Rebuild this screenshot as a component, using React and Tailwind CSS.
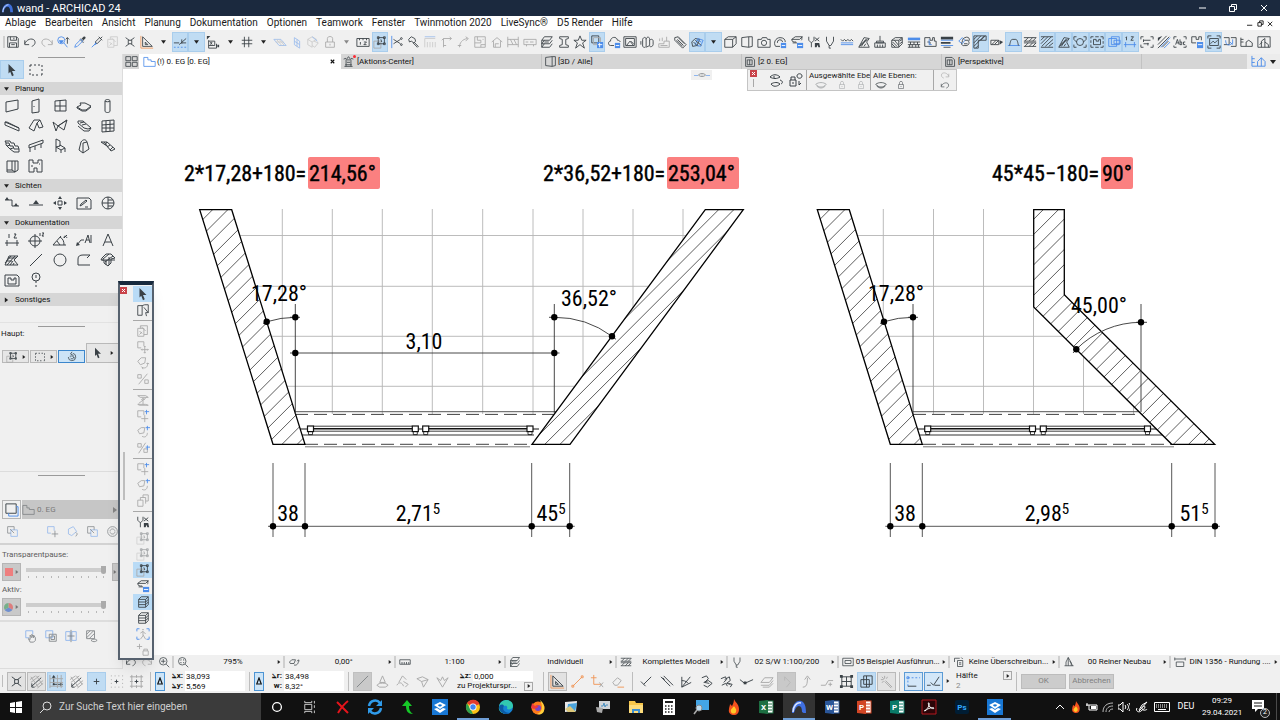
import clsx from "clsx";

const INK = {
    k: "#3a4146",
    b: "#4d8dea",
    o: "#f0975a",
    g: "#a9a9a9",
    w: "#ffffff",
};

// Each glyph is a list of [colour, path]; an upper-case colour fills instead of stroking.
const GLYPHS = {
    save: [["k", "M2 2h10l2 2v10H2zM5 2v4h7V2M4 14V9h8v5M6 11h4M9 3v2"]],
    undo: [["k", "M2 6v5h5M2 10C4 5 10 3 13 6c2 3 0 6-3 7"]],
    redo: [["g", "M14 6v5H9M14 10C12 5 6 3 3 6c-2 3 0 6 3 7"]],
    find: [["b", "M2 6a4 4 0 1 0 8 0a4 4 0 1 0-8 0M9 9l4 5"], ["B", "M3 6h6l-2 3H5z"], ["k", "M13 3v7M11 5l2-2 2 2"]],
    dropper: [["k", "M9 4l3 3M8 5l4 4"], ["b", "M2 14l1-3 6-6 2 2-6 6z"], ["K", "M10 4l2-2c2-1 3 1 2 2l-2 2z"]],
    syringe: [["b", "M2 14l5-5"], ["B", "M6 8l2 2-3 2z"], ["k", "M6 8l5-5 2 2-5 5zM10 2l4 4M12 4l2-2"]],
    shape: [["g", "M2 5h7v9H2zM5 5V2h8v10h-4M4 8l3 3M6 3l5 5M4 12l3-3"]],
    shrink: [["k", "M3 3l4 3M13 3L9 6M3 13l4-3M13 13l-4-3M6 6h4v4H6z"]],
    setsquare: [["o", "M1 1v14h14"], ["k", "M3 2v11h11zM6 8v3h3z"]],
    guide: [["k", "M1 9h6M10 9h5M7 11l8-7M10 5v5"], ["b", "M1 14h2M5 14h2M9 14h2M13 14h2"]],
    xy: [["k", "M3 6v9h9v-4M3 7h7v5H3M5 8l2 3M7 8l-2 3M12 10v3"], ["K", "M1 1h4L1 5zM13 11h2v3h-2z"]],
    grid: [["k", "M5 2v12M10 2v12M2 6h12M2 10h12"]],
    planeA: [["b", "M1 5h8l6 7H7z"], ["g", "M4 5l6 7M7 5l6 7M3 8h9"]],
    planeB: [["b", "M5 3l6 4v8l-6-4zM8 5v8M5 7l6 4"]],
    planeC: [["g", "M2 5l5-3 5 3-5 3zM2 5v6l5 3V8M9 7l5 2-4 5-3-2"], ["b", "M7 2l6 5"]],
    lock: [["g", "M3 8h10v6H3zM5 8V4c0-3 6-3 6 0v4M8 10v2"]],
    ruler: [["k", "M1 4h14v9H1zM4 4v2M8 4v2M12 4v2M5 8v3M9 8h3l-3 3h3"]],
    group: [["g", "M1 7h8v8H1z"], ["k", "M6 3h7v7H6zM5 2h2v2H5zM12 2h2v2h-2zM5 9h2v2H5zM12 9h2v2h-2zM9 5l1 3"]],
    cut: [["b", "M2 1v14"], ["k", "M4 5l8 5M4 10l8-5M12 4a1 1 0 1 0 2 0a1 1 0 1 0-2 0M12 11a1 1 0 1 0 2 0a1 1 0 1 0-2 0"]],
    hammer: [["k", "M3 5l3-3 4 2 1 3-2 2-3-2-2 1zM9 8l5 5-1 1-5-5"]],
    rail: [["g", "M2 14V4h12M5 14V8M8 14V8M11 14V8M14 14V8"], ["b", "M2 2h12"]],
    corner: [["g", "M4 14V4h9M2 6l2-2M11 2l2 2-2 2M4 12h3"]],
    curve: [["g", "M4 14c0-5 3-9 9-10M11 2l3 2-3 3M2 12h4"]],
    sheet: [["g", "M2 2h12v12H2zM5 2v4h4v3H2M9 14v-3h5M11 5h1"]],
    house: [["g", "M2 8l6-5 6 5M4 7v7h8V7M6 14v-4h4"]],
    beamH: [["g", "M2 2v12M14 2v12M2 5h12M2 11h12M5 5l3 6M9 5l3 6"]],
    bus: [["g", "M1 5h14v6H1zM3 8h3M8 8h4M4 11v2M12 11v2"]],
    layersK: [["k", "M2 6l3-4h9l-3 4zM2 10l3-4M2 10h9l3-4M2 14l3-4M2 14h9l3-4M2 6v8M5 8h5"]],
    ibeam: [["k", "M3 2h10v2l-3 1v6l3 1v2H3v-2l3-1V5L3 4z"]],
    star: [["k", "M8 1l2 5h5l-4 3 2 6-5-4-5 4 2-6-4-3h5z"]],
    copyB: [["k", "M2 1h8v8H2z"], ["g", "M4 3h8v8H4z"], ["B", "M8 8h7v7H8z"], ["w", "M9 11h5M11 9v5"]],
    cloud: [["k", "M8 12H4c-3 0-3-5 0-5 0-5 7-6 8-1 2 0 3 1 3 2"], ["B", "M9 9h6v6H9z"], ["w", "M10 12h4"]],
    picture: [["k", "M1 2h14v12H1zM3 4h10v8H3zM4 12l4-5 4 5M9 7l3 3"]],
    rollers: [["k", "M3 5c1-3 4-3 4 0v8c-1 2-3 1-4 0zM7 5c1-4 4-3 4 0v7l-4 2M11 6c2-2 4-1 4 1v4c0 2-3 3-4 2M1 7v4"]],
    water: [["g", "M8 7h6v7H2v-4h6zM3 4v3M6 3v4M11 2v5M4 12h8"]],
    tag: [["k", "M2 3l4-1 9 9-4 4-9-9zM5 5l7 7M6 3l7 7M4 6l7 7"]],
    solid: [["k", "M2 8l4-4 5 1-3 7-5 1z"], ["b", "M6 11l3-7 6 2-3 7zM8 6l5 2"], ["k", "M4 8l5 5M6 6l7 6"]],
    cube: [["k", "M2 5l4-3h9v8l-4 4H2zM2 5h9v9M11 5l4-3"]],
    persp: [["k", "M2 3l8-1v12l-8-1zM10 2h4v11l-4 1"]],
    camera: [["k", "M1 5h4l1-2h5l1 2h3v9H1zM5 9a3 3 0 1 0 6 0a3 3 0 1 0-6 0"]],
    cameraB: [["k", "M8 13H3C0 9 3 3 8 3c4 0 6 2 6 5M5 9a3 3 0 0 1 6-1"], ["B", "M9 9h6v6H9z"], ["w", "M10 12h4"]],
    layerB: [["k", "M2 5l4-3h8l-3 3zM2 5c0 3 2 3 5 3M3 9h5M14 2c-1 2 0 3-1 4"], ["B", "M8 9h7v6H8z"], ["w", "M9 12h5"]],
    pens: [["k", "M2 2v4l3 3 3-3V2M5 9v5M9 3l5 4M14 3L9 7"], ["K", "M9 14V9h5l1 5h-2l-1-3-1 3z"]],
    pen: [["k", "M4 2v5l3 5h2l3-5V2M7 12v3h2"]],
    waves: [["k", "M1 5l2 2 2-2 2 2 2-2 2 2 2-2 2 2"], ["b", "M1 9h14M1 11h14"]],
    hatch: [["k", "M2 14L8 3l6 1-3 4 3 6zM5 13l5-8M8 13l2-3M4 11l7-6M3 13l9-8"]],
    broom: [["k", "M8 1v6M4 7h8v2H4zM2 9h12v5H2zM5 11v3M8 11v3M11 11v3"]],
    block: [["k", "M2 6l4-3h8v7l-4 4H2zM2 6h8v8M10 6l4-3M3 8l5 5M2 10l4 4M5 6l5 6M11 7l3-2M11 10l3-2"]],
    brick: [["B", "M1 3h14v3H1z"], ["k", "M1 8h14M1 11h14M1 14h14M4 8v3M8 8v3M12 8v3M3 11v3M6 11v3M10 11v3M13 11v3"]],
    plan: [["k", "M2 3h6v3h3V3h2v4h2v6H2zM5 8h3v3"], ["b", "M7 5v6h3"]],
    bars: [["K", "M1 2h14v3H1zM1 8h11v2H1z"], ["b", "M1 6h14M1 12h14"], ["k", "M4 14h8"]],
    clouds: [["b", "M2 7l4-4 3 3-3 4z"], ["k", "M9 3c4-2 7 2 4 4 2 2 0 6-4 5-3 1-5-2-3-4 0-3 1-4 3-5M9 6h4M8 10h4"]],
    wallcorner: [["k", "M1 1h14v5H6v9H1zM1 5l4-4M1 9l8-8M1 13l12-12M3 15l3-3M9 6l5-5"]],
    wallarrow: [["k", "M1 6h9v5H1zM2 11l5-5M5 11l5-5"], ["K", "M11 6l4 2-4 3z"]],
    trapez: [["b", "M1 12h14"], ["k", "M3 12c1-6 2-7 3-7h4c1 0 2 1 3 7"]],
    hatchH: [["k", "M1 3h14M1 7h14M1 9h14M1 13h14M2 7l4-4M7 7l4-4M11 7l4-4M2 13l4-4M7 13l4-4M11 13l4-4"]],
    hatchF: [["k", "M1 2h14M1 14h14M1 6l4-4M1 10l8-8M2 13l11-11M6 13l9-8M10 13l5-4"]],
    target: [["k", "M4 8a4 4 0 1 0 8 0a4 4 0 1 0-8 0M1 5V2h3M12 2h3v3M15 11v3h-3M4 14H1v-3M4 8l-3-3M12 8l3-3"]],
    planframe: [["k", "M1 4V2h3M6 2h4M12 2h3v3M15 7v3M15 12v2h-3M10 14H6M4 14H1v-3M1 9V6M4 5h3v2h3V5h2v6H4z"]],
    stack: [["b", "M2 4h9v9H2zM5 2h9v9H5zM8 6h7v4H8z"]],
    dim: [["k", "M4 2v4M3 3l1-1M7 6h0M9 2h3l-3 4h3"], ["b", "M1 11h14M3 8v6M13 8v6"]],
    bounds: [["k", "M1 5V2h3M12 2h3v3M15 11v3h-3M4 14H1v-3M4 6h8M4 10h6M4 5v3M9 9v3"]],
    stripes: [["K", "M1 3l5-2-5 6z"], ["b", "M4 14L15 3M8 15l7-7"], ["k", "M1 11L11 1M1 15L14 2M6 14l7-7"]],
    abc: [["k", "M1 5V2h3M12 2h3v3M15 12v2h-3M4 14H1v-2M3 11l2-6 2 6M4 9h2M8 5v6h2V8H8M14 8h-2v3h2"]],
    planB: [["k", "M2 2h5v3h3V2h3v4M2 2v7h5"], ["B", "M8 8h7v7H8z"], ["w", "M9 11h5"]],
    image: [["k", "M1 4V1h4M11 1h4v3M15 12v3h-4M5 15H1v-3M3 4h10v8H3zM4 10l3-3 2 2 3-3M9 6h0"]],
    refs: [["k", "M1 3h6v8H1M9 3h6v10H9"], ["b", "M3 6c0 6 4 7 8 3M11 5v5M8 8l3 3"]],
    home3: [["k", "M1 3v10h6V8l3-2 4 3v4H7M1 5h3M1 8h3"]],
    frameP: [["k", "M1 2h14v12H1zM5 14V7l4-3v10M9 8l4 3v3M3 11l3-3"]],
    arrow: [["K", "M4 1l8 8H8l2 5-2 1-2-5-2 2z"]],
    marquee: [["k", "M2 3h2M6 3h2M10 3h2M14 3v2M14 7v2M14 11v2h-1M10 13H8M6 13H4M2 13v-2M2 9V7M2 5V3"]],
    wall: [["k", "M2 4l12-2v9L2 14z"]],
    door: [["k", "M4 3l7-2v13l-7 1zM6 8v1"]],
    window: [["k", "M3 3l11-1v11H3zM8 3v10M3 8h11"]],
    slab: [["k", "M1 9l4-2-1-2h5l6 3-5 4H6zM1 9v1l5 3h4l5-4"]],
    column: [["k", "M5 3c0-2 5-2 5 0v10c0 2-5 2-5 0zM5 3c0 1 5 1 5 0"]],
    beam: [["k", "M1 4l14 6v3L1 7zM1 4h2l12 6"]],
    roof: [["k", "M1 10l5-8h6l3 7-4 1-2-5-3 8zM12 2l-3 3"]],
    shell: [["k", "M1 4l5 4 9-6-3 10-6-4-2 5zM6 8l9-6"]],
    stair: [["k", "M2 3h5l8 7-3 1-4-1-6-5zM4 5l4-1M6 7l4-1M2 8l6 5h5l2-3"]],
    mesh: [["k", "M2 3l12-1v11L2 14zM6 3v11M10 3v10M2 7l12-1M2 10h12"]],
    stairs: [["k", "M1 3h5l1 2h3l1 3h3l1 3h-5l-1-3H6L5 5H2zM2 5v2l4 4 4 3h5v-3M3 8l3-1M6 11l3-1"]],
    railing: [["k", "M1 7l14-5v3L1 10zM2 10v4M7 8v4M13 6v4"]],
    chair: [["k", "M4 1v8l4-1V3zM4 9l5 3 4-2-5-3M4 9v5M9 12v3M13 10v4M8 7v1"]],
    zone: [["k", "M5 4c2-3 5-3 6 0l2 7-6 4-4-3zM7 15V5l4-1"]],
    curtain: [["k", "M1 4h6l8 7-4 2-4-5-6-4M4 4l4 5M7 4L5 7M10 7l-3 2M13 9l-3 3"]],
    morph: [["k", "M3 3h11v9l-3 2H3zM3 12h5V3M8 12l3 2M11 3v11"]],
    object: [["k", "M1 2h4v3h5V2h4v12h-5v-4H6v4H1zM3 8h2M11 6h1"]],
    section: [["k", "M1 5h7v6h7"], ["K", "M1 5l2-3 2 3zM10 11l2-3 2 3z"]],
    elevation: [["k", "M1 10h14"], ["K", "M5 9l3-4 3 4z"]],
    interior: [["k", "M6 6h4v4H6z"], ["K", "M8 1l2 3H6zM8 15l2-3H6zM1 8l3-2v4zM15 8l-3-2v4z"]],
    worksheet: [["k", "M1 3h12l2 2v9H1zM4 11l1-2 5-4 1 1-5 4zM9 12h3"]],
    detail: [["k", "M2 8a6 6 0 1 0 12 0a6 6 0 1 0-12 0M8 2v12M8 5h5M8 8h6M8 11h5M2 8h6"]],
    dimension: [["k", "M1 11h14M3 8v6M13 8v6M5 2v4M8 6h0M10 2h2l-2 4h3"]],
    level: [["k", "M2 9a5 5 0 1 0 10 0a5 5 0 1 0-10 0M7 2v14M0 9h14M12 1v3M14 1h2l-2 3h2"]],
    angle: [["k", "M1 13h13M1 13L9 4M8 5c3 2 4 4 4 8M5 9l3 4M12 6c0-3 2-2 3 0M15 3l-3 3"]],
    label: [["k", "M1 13l4-5h3M9 11l3-8 2 8M10 8h3M15 3v8"], ["K", "M0 14l1-4 3 3z"]],
    text: [["k", "M3 14L8 2l5 12M5 10h6"]],
    fill: [["k", "M1 13L5 4h9l-4 4 4 5zM3 13l8-9M6 13l3-4M1 11l6-7M9 13l1-2M2 9h6M4 6h8"]],
    line: [["k", "M2 14L14 2"]],
    circle: [["k", "M2 8a6 6 0 1 0 12 0a6 6 0 1 0-12 0"]],
    polyline: [["k", "M14 13H2V7c0-3 2-4 5-4h7l-3 3"]],
    drawing: [["k", "M2 6l4-4h5l4 4-4 1v4l-3 3-4-3V8L1 8zM3 7l6-5M5 10l8-6M6 8v5M9 5v8M2 8h13"]],
    figure: [["k", "M1 3h12l2 2v9H1zM4 6h3v2h3V6h2v6H4z"]],
    pin: [["k", "M4 5a4 4 0 1 0 8 0a4 4 0 1 0-8 0M8 9v2M8 13v2M8 3v3"]],
    drag: [["g", "M2 2h7v5M2 2v7h4M10 7v8M6 11h8M9 8l1-1 1 1M9 14l1 1 1-1M7 10l-1 1 1 1M13 10l1 1-1 1"]],
    rotate: [["g", "M2 6l4-4h5l-1 6-5 2zM7 13c4 2 7-1 6-5M6 12l1 1 1 2M12 9l1-1 2 1"]],
    mirror: [["g", "M13 2L3 14M2 3h4v4H2zM10 9h4v4h-4z"]],
    elevate: [["g", "M2 3h9l3 2H5zM2 13h9l3 1H4zM8 6v7M6 8l2-2 2 2M3 12l9-7"]],
    dragP: [["g", "M2 2h7v5M2 2v7h4M10 7v8M6 11h8"], ["b", "M12 1v5M10 3h5"]],
    rotateP: [["g", "M2 6l4-3h4l-1 6-5 1zM7 13c4 2 6-1 6-4"], ["b", "M13 1v5M11 3h5"]],
    mirrorP: [["g", "M11 2L3 14M2 3h4v4H2zM9 9h4v4H9z"], ["b", "M13 5v5M11 7h5"]],
    copies: [["g", "M2 7h6v7H2zM5 4h6v7M8 1h6v7h-3M5 4v3M8 1v3"]],
    select: [["k", "M2 3h5v11H2zM7 3l3-1h4v9M9 5l5 6h-3l1 4"]],
    sheets: [["k", "M3 5l3-3h8v9l-3 3H3zM3 5h8l3-3M3 8h8l3-3M3 11h8l3-3M11 5v9"]],
    run: [["b", "M1 5V2h3M12 2h3v3M15 11v3h-3M4 14H1v-3"], ["g", "M7 3h2M5 7l3-2 3 3M8 5v5l-3 4M8 9l3 5"]],
    lockP: [["g", "M8 9h6v5H8zM9 9V7h4v2M4 1v6M1 4h6"]],
    zoomin: [["k", "M2 7a5 5 0 1 0 10 0a5 5 0 1 0-10 0M11 11l4 4M4 7h6M7 4v6"]],
    fit: [["k", "M2 7a5 5 0 1 0 10 0a5 5 0 1 0-10 0M11 11l4 4M5 6V5h1M8 5h1v1M9 8v1H8M6 9H5V8"]],
    tilt: [["k", "M2 8l3-3h5l-2 5H3zM8 12c4 1 6-2 6-6M12 7l2-2 1 2"]],
    scale: [["k", "M1 5h14v6H1zM4 8v3M7 8v3M10 8v3M13 8v3"]],
    layout: [["k", "M1 3h14v10H1zM4 6h8v4H4z"]],
    override: [["k", "M2 3h7M2 3v5M6 6h7v8H6zM8 9h3M8 11h3M11 2l2 2"]],
    reno: [["k", "M2 13h12M4 13V8l3-6 4 7v4M9 7l4 6M7 2v11"]],
    stdim: [["k", "M1 4h14M1 2v4M15 2v4M3 8h10v6H3z"]],
    snapgrid: [["k", "M3 13L13 4M3 10v4h3"], ["g", "M1 6l6-4M2 9l9-7M6 14l9-7M9 15l6-5M2 3l8 11M8 2l6 9"]],
    ortho: [["k", "M5 3v8h8"], ["K", "M3 4l2-3 2 3zM12 9l3 2-3 2zM4 10h2v2H4z"], ["g", "M1 5h14M1 9h14M9 1v14M13 1v14M1 13h14M1 1v14"]],
    plus: [["k", "M8 5v6M5 8h6"]],
    dots: [["k", "M8 6v4M6 8h4"], ["g", "M2 2h1M6 2h1M10 2h1M14 2h1M2 6h1M14 6h1M2 10h1M14 10h1M2 14h1M6 14h1M10 14h1M14 14h1"]],
    gridplus: [["k", "M8 6v4M6 8h4"], ["g", "M3 1v14M13 1v14M1 3h14M1 13h14M8 1v3M8 12v3M1 8h3M12 8h3"]],
    slash: [["k", "M2 14L14 2"]],
    cone: [["g", "M8 2l3 7H5zM2 12c2-3 10-3 12 0l-3 2H5z"]],
    bell: [["g", "M4 9l4-7 4 4M2 12c2-4 6-3 7 1M9 8l5 3-3 3"]],
    kite: [["g", "M2 5l6-2 6 3-5 8-2-6zM7 8l7-2"]],
    nodes: [["g", "M8 14L2 4l4 3 2-4 2 4 4-3z"]],
    nodeline: [["o", "M3 13L13 3M2 12h2v2H2zM12 2h2v2h-2z"]],
    nodex: [["o", "M4 1v10h8M1 4h6"], ["g", "M10 9l4 5M14 9l-4 5"]],
    eraser: [["g", "M3 9l5-5 4 3-4 5H5z"], ["o", "M8 14h7"]],
    check: [["k", "M2 8l5 5M5 11l8-8"]],
    parallel: [["k", "M2 3l10 10M5 2l10 10M4 4l2 2"]],
    bisect: [["k", "M3 14V3M3 14l10-5M3 14L12 3M3 7c4 0 6 2 7 3"]],
    offset: [["k", "M3 4l5-2 2 3-4 4 5 1M5 9l5-2 4 3-5 4-4-2"]],
    multi: [["k", "M2 5l5-2 1 3-3 3M6 6l5-3 1 4-4 3 4 1M3 12l4-2 2 3M10 10l4 1-2 3"]],
    onarc: [["k", "M1 6l5 4 9-4"], ["K", "M5 8h3v3H5z"]],
    slabs: [["g", "M2 9l4-5h9l-4 5zM2 12h9l4-5M4 14h7l4-4"]],
    bend: [["g", "M6 3l6 6-4 5M6 3v4"]],
    bend2: [["g", "M4 14c4 0 5-3 5-10M6 6l3-4 3 4"]],
    bend3: [["g", "M2 12h5l3-5h5M12 9v4M10 11h4"]],
    resize: [["k", "M3 3h10v10H3zM8 3v10M3 8h10"], ["K", "M1 1h3v3H1zM12 1h3v3h-3zM1 12h3v3H1zM12 12h3v3h-3z"]],
    overlap: [["k", "M2 6h9v8H2zM5 2h9v9H5zM8 2v12"]],
    wand: [["g", "M7 7l7 7M6 2v3M2 6h3M3 3l2 2M9 3L8 5M3 9l2-1M6 8l7 7"]],
    origin: [["b", "M2 4h2M6 4h2M10 4h2M14 4h1M1 3h2v2H1zM2 7v2M2 11v2"], ["k", "M2 13h9"]],
    snapcheck: [["k", "M5 9l3 3 6-9M1 12h4M9 12h6"]],
    floor: [["k", "M2 2h11v10H2z"], ["b", "M13 5h2v10H5v-3"]],
    folder: [["k", "M1 3h5v3h3v2h6v6H1z"]],
    swap: [["b", "M6 6h8v8H6z"], ["k", "M2 2h8v4M2 2v8h4M5 5l5 5"]],
    dragB: [["b", "M2 2h8v5M2 2v8h4"], ["k", "M11 7v8M7 11h8"]],
    rotateB: [["b", "M3 5l6-3 4 6-6 5-4-2z"], ["k", "M12 9l2 2-2 3"]],
    cycle: [["k", "M2 8a6 6 0 1 0 12 0a6 6 0 1 0-12 0M5 8c0-4 5-4 6-1M11 8c0 4-5 4-6 1"]],
    hand: [["b", "M2 2h8v4M2 2v8h4"], ["k", "M7 15l-2-4 2 1V7l2 3V6l2 4V7l2 3v3l-2 2z"]],
    merge: [["b", "M2 2h8v8H2z"], ["k", "M6 6h8v8H6zM8 8h4v4H8z"]],
    split: [["b", "M2 3h5v10H2zM9 3h5v10H9z"], ["k", "M8 1v14M4 8h8"]],
    hatchB: [["k", "M3 2h9v9H3zM3 6l4-4M3 10l8-8M6 11l6-6M8 13c2-2 5-2 7 0-2 2-5 2-7 0"]],
    eye: [["k", "M1 8c4-4 10-4 14 0-4 4-10 4-14 0M7 8h2"]],
    lid: [["k", "M1 7c4-3 10-3 14 0-4 5-10 5-14 0M2 9c4 4 8 4 12 0"]],
    eyes: [["k", "M2 5c3-3 7-3 10 0-3 2-7 2-10 0M6 4v2M3 12c3-2 7-2 9 0-3 3-7 3-9 0M12 8c3 1 3 3 1 4"]],
    locks: [["k", "M2 8h6v6H2zM3 8V5h4v3M9 4c0-3 5-3 5 0 0 3-5 3-5 0M11 9v4l2-2M5 10v2"]],
    padlock: [["k", "M3 7h10v8H3zM5 7V3c0-3 6-3 6 0v4M8 10v2"]],
    viewmap: [["b", "M1 2v11h6V8l4-4 4 4v5H7M1 5h3M1 9h3M11 4v9"]],
    window2: [["k", "M2 3h8l3 3v8H2zM4 6h6v6H4zM7 6v6"]],
    quads: [["k", "M1 2h6v5H1zM9 2h6v5H9zM1 9h6v5H1zM9 9h6v5H9z"]],
    plantab: [["b", "M1 3h5v3h4v2h5v6H1z"]],
    tower: [["k", "M5 14V6l3-4 3 4v8M3 14h10M6 9h4M6 6h4M4 12h8M2 5l3-1M14 5l-3-1"]],
    magnet: [["k", "M3 8a5 5 0 1 0 6-5M8 1L6 4l4 2M6 9l2 2 3-3M5 7c3-1 6 0 6 3"]],
};

function Glyph({ name, className }) {
    return (
        <svg viewBox="0 0 16 16" aria-hidden="true" className={clsx("shrink-0", className || "size-4")}>
            {GLYPHS[name].map(([c, d], i) => {
                const filled = c !== c.toLowerCase();
                const color = INK[c.toLowerCase()];
                return (
                    <path
                        key={i}
                        d={d}
                        fill={filled ? color : "none"}
                        stroke={filled ? "none" : color}
                        strokeWidth="1"
                        strokeLinejoin="round"
                    />
                );
            })}
        </svg>
    );
}

function Caret({ right, className }) {
    return (
        <svg viewBox="0 0 6 6" aria-hidden="true" className={clsx("size-[6px] shrink-0", className)}>
            <path d={right ? "M1 0l4 3-4 3z" : "M0 1h6L3 5z"} fill="#222" />
        </svg>
    );
}

// "*" marks a pressed button, "-" a disabled one
const TOOLBAR = (
    "save undo redo find dropper syringe -shape shrink setsquare caret *guide *caret xy caret grid caret " +
    "-planeA -planeB -planeC lock -caret ruler *group cut hammer -rail corner curve sheet house beamH bus " +
    "layersK ibeam star *copyB cloud picture rollers water tag *solid *caret cube persp camera cameraB layerB " +
    "pens pen waves hatch broom block brick plan bars clouds *wallcorner wallarrow *trapez hatchH *hatchF " +
    "*hatch *target *planframe *stack *dim bounds stripes abc planB *image refs home3 frameP"
).split(" ");

const MENU = [
    "Ablage", "Bearbeiten", "Ansicht", "Planung", "Dokumentation", "Optionen",
    "Teamwork", "Fenster", "Twinmotion 2020", "LiveSync®", "D5 Render", "Hilfe",
];

const SECTIONS = [
    {
        title: "Planung",
        tools: "wall door window slab column beam roof shell stair mesh stairs railing chair zone curtain morph object".split(" "),
    },
    { title: "Sichten", tools: "section elevation interior worksheet detail".split(" ") },
    {
        title: "Dokumentation",
        tools: "dimension level angle label text fill line circle polyline drawing figure pin".split(" "),
    },
    { title: "Sonstiges", tools: [] },
];

const PALETTE = [
    ["*arrow", "select"],
    ["shape", "drag", "rotate", "mirror"],
    ["elevate", "dragP", "rotateP", "mirrorP"],
    ["dragP", "rotateP", "copies"],
    ["pens", "-group", "-group", "*group", "layerB", "*sheets", "sheets", "run", "lockP"],
];

const VIEW_OPTIONS = [
    ["fit", "795%"],
    ["tilt", "0,00°"],
    ["scale", "1:100"],
    ["layersK", "Individuell"],
    ["hatchH", "Komplettes Modell"],
    ["pen", "02 S/W 1:100/200"],
    ["layout", "05 Beispiel Ausführun..."],
    ["override", "Keine Überschreibun..."],
    ["reno", "00 Reiner Neubau"],
    ["stdim", "DIN 1356 - Rundung ...."],
];

function parse(token) {
    return {
        on: token[0] === "*",
        off: token[0] === "-",
        name: token.replace(/^[*-]/, ""),
    };
}

function Titlebar() {
    return (
        <header className="flex h-4 shrink-0 items-center bg-[#1b293e] pl-0.5 text-white">
            <svg viewBox="0 0 12 12" className="size-[11px]" aria-hidden="true">
                <path d="M0 10C0 4 4 0 8 1c3 1 4 5 4 9H9c0-4-1-6-3-6S2 7 2 10z" fill="#3f6fd8" />
                <path d="M1 10c0-5 3-8 6-8" stroke="#dfe9ff" fill="none" />
            </svg>
            <h1 className="ml-1 text-[11px]">wand - ARCHICAD 24</h1>
            <div className="ml-auto flex">
                <button aria-label="Minimieren" className="flex w-[30px] justify-center">
                    <svg viewBox="0 0 8 8" className="size-2"><path d="M0 4h7" stroke="#fff" /></svg>
                </button>
                <button aria-label="Verkleinern" className="flex w-[30px] justify-center">
                    <svg viewBox="0 0 8 8" className="size-2"><path d="M.5 2.5h5v5h-5zM2.5 2.5v-2h5v5h-2" stroke="#fff" fill="none" /></svg>
                </button>
                <button aria-label="Schließen" className="flex w-8 justify-center">
                    <svg viewBox="0 0 8 8" className="size-2"><path d="M1 1l6 6M7 1L1 7" stroke="#fff" /></svg>
                </button>
            </div>
        </header>
    );
}

function MenuBar() {
    return (
        <nav className="flex h-3.5 shrink-0 items-center gap-[9px] bg-white pr-1.5 pl-[5px] text-[10px] whitespace-nowrap">
            {MENU.map((m) => (
                <button key={m}>{m}</button>
            ))}
            <div className="ml-auto flex gap-[3px]">
                {["M0 6h6", "M1 3h4v4H1zM3 3V1h4v4H5", "M1 2l5 5M6 2L1 7"].map((d, i) => (
                    <button key={d} aria-label={["Minimieren", "Verkleinern", "Schließen"][i]}>
                        <svg viewBox="0 0 8 8" className="size-[7px]"><path d={d} stroke="#111" fill="none" /></svg>
                    </button>
                ))}
            </div>
        </nav>
    );
}

function Toolbar() {
    return (
        <div className="flex h-6 shrink-0 items-center bg-[#f0f0f0] pr-2 pl-[3px]">
            <span className="h-3 w-0.5 bg-[#cfcfcf]" />
            {TOOLBAR.map((t, i) => {
                const { on, off, name } = parse(t);
                return (
                    <button
                        key={i}
                        aria-label={name}
                        className={clsx(
                            "flex h-5 min-w-0 flex-1 items-center justify-center border",
                            on ? "border-[#a9cdec] bg-[#c0dcf3]" : "border-transparent",
                            off && "opacity-50"
                        )}
                    >
                        {name === "caret" ? <Caret className="w-[5px]" /> : <Glyph name={name} className="size-[14px]" />}
                    </button>
                );
            })}
        </div>
    );
}

function Grip() {
    return (
        <div className="flex h-1.5 items-center justify-center">
            <span className="h-px w-[47px] bg-[#9a9a9a]" />
        </div>
    );
}

function OpacityRow({ label, children }) {
    return (
        <div className="mt-0.5 flex h-[18px] items-start">
            <button aria-label={label} className="flex h-[18px] w-[19px] shrink-0 items-center justify-center gap-0.5 border border-[#b5b5b5] bg-[#c9c9c9]">
                {children}
                <Caret right className="w-1 opacity-50" />
            </button>
            <div className="ml-[5px] w-20">
                <input
                    type="range"
                    aria-label={label + " Deckkraft"}
                    defaultValue="100"
                    className="mt-[5px] block h-1 w-full appearance-none bg-[#cdcdcd] [&::-webkit-slider-thumb]:h-2 [&::-webkit-slider-thumb]:w-[5px] [&::-webkit-slider-thumb]:appearance-none [&::-webkit-slider-thumb]:rounded-b-sm [&::-webkit-slider-thumb]:bg-[#ababab]"
                />
                <div className="mt-1 flex justify-between px-0.5">
                    {Array.from({ length: 11 }, (_, i) => (
                        <span key={i} className="h-0.5 w-px bg-[#b8b8b8]" />
                    ))}
                </div>
            </div>
            {label === "Transparentpause" && (
                <button aria-label="Optionen" className="ml-1.5 flex h-[18px] flex-1 items-center border border-[#b5b5b5] bg-[#c9c9c9]">
                    <Caret right className="w-1 opacity-50" />
                </button>
            )}
        </div>
    );
}

function Sidebar() {
    return (
        <aside className="flex w-[123px] shrink-0 flex-col border-r border-[#dcdcdc] bg-[#f0f0f0] text-[8px]">
            <Grip />
            <div className="mb-[3px] flex h-[19px]">
                <button aria-label="Pfeil" className="flex w-6 items-center justify-center border border-[#a9cdec] bg-[#c0dcf3]">
                    <Glyph name="arrow" className="size-[14px]" />
                </button>
                <button aria-label="Markierung" className="flex w-6 items-center justify-center">
                    <Glyph name="marquee" />
                </button>
            </div>
            {SECTIONS.map((s) => (
                <section key={s.title}>
                    <h2 className="flex h-[13px] items-center gap-1.5 bg-[#d6d6d6] pl-1 text-[#111]">
                        <Caret right={!s.tools.length} className="w-[5px]" />
                        {s.title}
                    </h2>
                    {s.tools.length > 0 && (
                        <div className="grid w-[120px] grid-cols-5 pt-px pb-[3px]">
                            {s.tools.map((t) => (
                                <button key={t} aria-label={t} className="flex h-5 items-center justify-center">
                                    <Glyph name={t} />
                                </button>
                            ))}
                        </div>
                    )}
                </section>
            ))}
            <div className="mt-4 border-t border-[#e2e2e2]">
                <Grip />
                <p className="px-px leading-[10px]">Haupt:</p>
                <div className="mt-1 flex h-5 items-end gap-px pl-0.5">
                    {["group", "marquee"].map((g) => (
                        <button key={g} aria-label={g} className="flex h-[13px] w-[27px] items-center justify-center gap-1 border border-[#b9b9b9] bg-[#e6e6e6]">
                            <Glyph name={g} className="size-3" />
                            <Caret right className="w-1" />
                        </button>
                    ))}
                    <button aria-label="magnet" className="flex h-[13px] w-[27px] items-center justify-center border border-[#3b86cc] bg-[#cce4f7]">
                        <Glyph name="magnet" className="size-3" />
                    </button>
                    <button aria-label="Pfeilmethode" className="flex h-5 w-[34px] items-center justify-center gap-1.5 border border-[#b9b9b9] bg-[#e6e6e6]">
                        <Glyph name="arrow" className="size-3" />
                        <Caret right className="w-1" />
                    </button>
                </div>
            </div>
            <div className="flex-1" />
            <div className="border-y border-[#dcdcdc] pb-[25px] text-[#5c5c5c]">
                <Grip />
                <div className="mt-[22px] flex h-[19px] gap-px pl-0.5">
                    <button aria-label="Transparentpause" className="flex w-[19px] items-center justify-center border border-[#b5b5b5]">
                        <Glyph name="floor" className="size-[15px]" />
                    </button>
                    <button className="flex flex-1 items-center gap-0.5 bg-[#c6c6c6] pr-1 text-[#7a7a7a]">
                        <Glyph name="folder" className="size-[13px] opacity-50" />
                        0. EG
                        <Caret right className="ml-auto opacity-40" />
                    </button>
                </div>
                <div className="mt-1 flex h-4 items-center pl-0.5 opacity-55">
                    {["swap", null, "dragB", "rotateB", "swap", "cycle"].map((g, i) =>
                        g ? (
                            <button key={i} aria-label={g} className="flex w-5 justify-center"><Glyph name={g} className="size-[13px]" /></button>
                        ) : (
                            <span key={i} className="w-5" />
                        )
                    )}
                </div>
                <div className="mt-1 border-t-2 border-[#d2d2d2] pt-1 pl-0.5">
                    <p className="h-3 leading-3">Transparentpause:</p>
                    <OpacityRow label="Transparentpause">
                        <span className="size-2 bg-[#ee7f7f]" />
                    </OpacityRow>
                    <p className="mt-[3px] h-3 leading-3">Aktiv:</p>
                    <OpacityRow label="Aktiv">
                        <svg viewBox="0 0 10 10" className="size-[9px]" aria-hidden="true">
                            <path d="M5 5V0a5 5 0 0 1 4.3 7.5z" fill="#dd7d7d" />
                            <path d="M5 5l4.3 2.5a5 5 0 0 1-8.6 0z" fill="#6f8fce" />
                            <path d="M5 5L.7 7.5A5 5 0 0 1 5 0z" fill="#76b08a" />
                        </svg>
                    </OpacityRow>
                </div>
                <div className="mt-1 flex justify-center border-t-2 border-[#d2d2d2] pt-[7px] opacity-60">
                    {["hand", "merge", "split", "hatchB"].map((g) => (
                        <button key={g} aria-label={g} className="flex w-5 justify-center"><Glyph name={g} className="size-[14px]" /></button>
                    ))}
                </div>
            </div>
        </aside>
    );
}

function CloseBox() {
    return (
        <button aria-label="Palette schließen" className="size-[7px] shrink-0 bg-[#c9434a]">
            <svg viewBox="0 0 7 7" className="size-[7px]"><path d="M2 2l3 3M5 2L2 5" stroke="#fff" /></svg>
        </button>
    );
}

// Floating edit palette, lies over the sidebar and the drawing
function EditPalette() {
    return (
        <div className="absolute top-[227px] left-[118px] w-9 border-2 border-t-4 border-[#56616e] border-t-[#17293d] bg-[#f0f0f0] shadow-lg">
            <div className="flex justify-between pt-px">
                <div className="flex flex-col items-center pt-px">
                    <CloseBox />
                    <span className="mt-[158px] h-12 w-0.5 bg-[#bdbdbd]" />
                </div>
                <div className="w-[19px]">
                    {PALETTE.map((grp, i) => (
                        <div key={i}>
                            {i > 0 && <div className="flex h-[5px] items-center"><span className="h-px w-full bg-[#a8a8a8]" /></div>}
                            {grp.map((t, j) => {
                                const { on, off, name } = parse(t);
                                return (
                                    <button
                                        key={j}
                                        aria-label={name}
                                        className={clsx("flex h-4 w-full items-center justify-center", on && "bg-[#b9dbf6]", off && "opacity-40")}
                                    >
                                        <Glyph name={name} className="size-[14px]" />
                                    </button>
                                );
                            })}
                        </div>
                    ))}
                </div>
            </div>
        </div>
    );
}

function LayerPalette() {
    return (
        <div className="absolute top-0 left-[624px] flex h-[22px] w-[210px] border border-[#c4c4c4] bg-[#f0f0f0] text-[8px] whitespace-nowrap">
            <div className="flex w-[9px] flex-col items-center gap-0.5 pl-px">
                <CloseBox />
                <span className="h-2 w-px bg-[#a8a8a8]" />
            </div>
            <div className="flex w-[49px] items-center justify-end gap-1 pr-0.5">
                <button aria-label="Ebenen zeigen"><Glyph name="eyes" /></button>
                <button aria-label="Ebenen sperren"><Glyph name="locks" /></button>
            </div>
            <div className="w-16 border-l border-[#a8a8a8] pl-0.5">
                <p className="h-[11px] leading-[11px]">Ausgewählte Ebe</p>
                <div className="flex h-2 items-center justify-around opacity-45">
                    <Glyph name="lid" className="size-3" />
                    <Glyph name="padlock" className="size-2" />
                    <Glyph name="padlock" className="size-2" />
                </div>
            </div>
            <div className="w-[63px] border-l border-[#a8a8a8] pl-0.5">
                <p className="h-[11px] leading-[11px]">Alle Ebenen:</p>
                <div className="flex h-2 items-center gap-2.5 pl-0.5">
                    <Glyph name="lid" className="size-3" />
                    <Glyph name="padlock" className="size-2" />
                </div>
            </div>
            <div className="flex flex-1 flex-col items-center justify-center border-l border-[#a8a8a8]">
                <button aria-label="Vor"><Glyph name="redo" className="size-2.5" /></button>
                <button aria-label="Zurück"><Glyph name="undo" className="size-2.5" /></button>
            </div>
        </div>
    );
}

const TABS = [
    ["[3D / Alle]", "persp"],
    ["[2 0. EG]", "window2"],
    ["[Perspektive]", "window2"],
];

function Tabs() {
    return (
        <div className="flex h-[15px] shrink-0 bg-[#d6d6d6] text-[8px] text-[#111]">
            <button aria-label="Tabübersicht" className="flex w-4 items-center justify-center">
                <Glyph name="quads" className="size-[13px]" />
            </button>
            <div className="flex w-[202px] items-center bg-white px-1">
                <Glyph name="plantab" className="size-[13px]" />
                <button className="ml-px">(!) 0. EG [0. EG]</button>
                <button aria-label="Tab schließen" className="mr-px ml-auto">
                    <svg viewBox="0 0 8 8" className="size-[7px]"><path d="M2 2l4 4M6 2L2 6" stroke="#111" strokeWidth="1.3" /></svg>
                </button>
            </div>
            <button className="flex w-[200px] items-center gap-0.5 pl-px">
                <span className="relative">
                    <Glyph name="tower" className="size-[13px]" />
                    <span className="absolute top-0 -right-px size-[3px] rounded-full bg-red-500" />
                </span>
                [Aktions-Center]
            </button>
            {TABS.map(([text, icon]) => (
                <button key={text} className="flex w-[200px] items-center gap-px border-l border-[#c2c2c2] pl-0.5">
                    <Glyph name={icon} className="size-[13px]" />
                    {text}
                </button>
            ))}
            <div className="flex-1 border-l border-[#c2c2c2]" />
            <button aria-label="Navigator" className="flex w-[33px] items-center justify-center gap-1 bg-[#ececec]">
                <Glyph name="viewmap" className="size-[15px]" />
                <Caret />
            </button>
        </div>
    );
}

// 45° hatching: lines x + y = c, cut to the wall outline
function Wall({ id, points, phase }) {
    const xs = points.map((p) => p[0]);
    const ys = points.map((p) => p[1]);
    const lo = Math.min(...xs) + Math.min(...ys);
    const hi = Math.max(...xs) + Math.max(...ys);
    const step = 15.2;
    const lines = [];
    for (let c = phase - Math.ceil((phase - lo) / step) * step; c < hi; c += step) lines.push(c);
    const outline = points.map((p) => p.join(",")).join(" ");
    return (
        <g>
            <clipPath id={id}><polygon points={outline} /></clipPath>
            <polygon points={outline} fill="#fff" />
            <g clipPath={`url(#${id})`} stroke="#333" strokeWidth="0.8">
                {lines.map((c) => (
                    <line key={c} x1={c - 200} y1="200" x2={c - 450} y2="450" />
                ))}
            </g>
            <polygon points={outline} fill="none" stroke="#000" strokeWidth="1.3" />
        </g>
    );
}

function GridLines({ id, clip, xs, x1, x2 }) {
    return (
        <g stroke="#b4b4b4" strokeWidth="0.9">
            <clipPath id={id}><polygon points={clip} /></clipPath>
            <g clipPath={`url(#${id})`}>
                {xs.map((x) => <line key={x} x1={x} y1="209" x2={x} y2="414" />)}
                {[235.5, 286.3, 336.3, 386.3].map((y) => <line key={y} x1={x1} y1={y} x2={x2} y2={y} />)}
            </g>
        </g>
    );
}

function WindowFrame({ left, right, inL, inR, frames }) {
    return (
        <g stroke="#111" strokeWidth="1" fill="none">
            <path d={`M${inL} 411.7H${inR}`} stroke="#555" />
            <path d={`M${inL} 414.4H${inR}`} strokeDasharray="13 6" strokeWidth="0.8" />
            <path d={`M${left} 444.3H${right}`} strokeDasharray="13 6" strokeWidth="0.8" />
            <path d={`M${left} 446.8H${right}`} stroke="#777" />
            <path d={`M${left - 3} 435H${right + 4}`} stroke="#777" strokeWidth="1.3" />
            <path d={`M${left - 5} 429H${frames[0]}M${frames[3] + 6} 429H${right + 9}M${frames[1] + 6} 429H${frames[2]}`} />
            {[0, 2].map((i) => (
                <g key={i}>
                    <path d={`M${frames[i] + 6} 426.2H${frames[i + 1]}M${frames[i] + 6} 431.2H${frames[i + 1]}`} strokeWidth="0.8" />
                    <path d={`M${frames[i] + 6} 428.7H${frames[i + 1]}`} strokeWidth="1.5" />
                </g>
            ))}
            {frames.map((x) => (
                <g key={x}>
                    <rect x={x} y="426" width="6" height="5.6" fill="#fff" strokeWidth="1.2" />
                    <path d={`M${x + 1} 431.6v3h4v-3`} strokeWidth="0.8" />
                </g>
            ))}
        </g>
    );
}

function Dots({ at }) {
    return at.map(([x, y]) => <circle key={x + "," + y} cx={x} cy={y} r="3.2" />);
}

function Extensions({ xs }) {
    return (
        <g stroke="#444" strokeWidth="0.9">
            {xs.map((x) => <line key={x} x1={x} y1="463" x2={x} y2="537" />)}
            <line x1={xs[0] - 5} y1="526.3" x2={xs[3] + 5} y2="526.3" />
        </g>
    );
}

function Formula({ x, boxX, boxW, term, result }) {
    return (
        <g fontSize="22" stroke="#000" strokeWidth="0.4">
            <rect x={boxX} y="157" width={boxW} height="32" rx="2" fill="#fb8080" stroke="none" />
            <text x={x} y="181">{term}</text>
            <text x={boxX + 1} y="181">{result}</text>
        </g>
    );
}

function Measure({ x, sup, children }) {
    return (
        <text x={x} y="521" textAnchor="middle">
            {children}
            {sup && <tspan dy="-7" fontSize="15">{sup}</tspan>}
        </text>
    );
}

function Drawing() {
    return (
        <svg
            viewBox="123 69 1157 586"
            className="h-full w-full font-['Liberation_Sans_Narrow','Roboto_Condensed','DejaVu_Sans_Condensed',sans-serif]"
            fontSize="22"
            role="img"
            aria-label="Grundriss"
        >
            <Formula x={184} boxX={308} boxW={72} term="2*17,28+180=" result="214,56°" />
            <Formula x={543} boxX={667} boxW={72} term="2*36,52+180=" result="253,04°" />
            <Formula x={992} boxX={1101} boxW={32} term="45*45−180=" result="90°" />

            <GridLines id="gridA" clip="232,209 705,209 555,414 295,414" xs={[282.3, 332.3, 382.3, 432.3, 482.7, 533, 583, 633, 683]} x1={200} x2={745} />
            <WindowFrame left={305} right={530} inL={295} inR={556} frames={[307.5, 412.3, 422.7, 527]} />
            <Wall id="wallA" phase={452.7} points={[[199.7, 209.7], [231.7, 209.7], [305, 444.3], [273, 444.3]]} />
            <Wall id="wallB" phase={928.3} points={[[705.3, 209.7], [743.3, 209.7], [570, 444.3], [532, 444.3]]} />

            <GridLines id="gridB" clip="849,209 1033,209 1033,307 1141,414 913,414" xs={[883.3, 933.5, 983.5, 1033.5, 1083.5, 1133.5]} x1={840} x2={1150} />
            <WindowFrame left={923} right={1174} inL={913} inR={1141} frames={[924.7, 1029.5, 1040.3, 1144.5]} />
            <Wall id="wallC" phase={1069.7} points={[[817.3, 209.7], [849.3, 209.7], [922.3, 444.3], [890.3, 444.3]]} />
            <Wall
                id="wallD"
                phase={1283.3}
                points={[[1033.7, 209.7], [1064.3, 209.7], [1064.3, 294.7], [1214.7, 444.3], [1171.7, 444.3], [1033.7, 307]]}
            />

            <g stroke="#333" strokeWidth="0.9" fill="none">
                <path d="M295.3 304V414M554.3 304V413M290 353H559.5M290 317.3h10M549 317.3h5" />
                <path d="M263 323.5l4-1.8A96 96 0 0 1 295.3 317.3M554.3 317.3A96 96 0 0 1 612 336.3l4 3" />
                <path d="M913 304V414M1141 304V412M908 317.3h10M1136 322.3h11" />
                <path d="M880 323.5l4-1.8A96 96 0 0 1 913 317.3M1073 353l3.3-3.7A91.6 91.6 0 0 1 1141 322.3" />
            </g>
            <Extensions xs={[273, 305, 531.7, 569.7]} />
            <Extensions xs={[890.3, 922.3, 1171.7, 1215]} />
            <Dots
                at={[
                    [266.7, 321.7], [295.3, 317.3], [295.3, 353], [554.3, 317.3], [554.3, 353], [612, 336.3],
                    [273, 526.3], [305, 526.3], [531.7, 526.3], [569.7, 526.3],
                    [884, 321.7], [913, 317.3], [1076.3, 349.3], [1141, 322.3],
                    [890.3, 526.3], [922.3, 526.3], [1171.7, 526.3], [1215, 526.3],
                ]}
            />

            <g textAnchor="middle">
                <text x="279" y="301">17,28°</text>
                <text x="589" y="306">36,52°</text>
                <text x="424" y="349">3,10</text>
                <text x="896" y="301">17,28°</text>
                <text x="1099" y="313">45,00°</text>
            </g>
            <Measure x={288}>38</Measure>
            <Measure x={418} sup="5">2,71</Measure>
            <Measure x={551} sup="5">45</Measure>
            <Measure x={905}>38</Measure>
            <Measure x={1047} sup="5">2,98</Measure>
            <Measure x={1194} sup="5">51</Measure>
        </svg>
    );
}

function ViewBar() {
    return (
        <div className="flex h-3.5 shrink-0 items-center bg-[#f0f0f0] text-[8px] whitespace-nowrap text-[#111]">
            <div className="flex w-[49px] justify-around">
                {["undo", "redo", "zoomin"].map((g) => (
                    <button key={g} aria-label={g}><Glyph name={g} className="size-3" /></button>
                ))}
            </div>
            {VIEW_OPTIONS.map(([icon, text]) => (
                <button key={text} className="flex h-3 min-w-0 flex-1 items-center border-l-2 border-[#cfcfcf] pr-0.5 pl-[3px]">
                    <Glyph name={icon} className="size-3" />
                    <span className="flex-1 text-center">{text}</span>
                    <Caret right className="w-1" />
                </button>
            ))}
        </div>
    );
}

function Slot({ name, look }) {
    return (
        <button
            aria-label={name}
            className={clsx(
                "mr-px flex h-[19px] w-[19px] shrink-0 items-center justify-center border",
                !look && "border-transparent",
                look === "on" && "border-[#a9cdec] bg-[#c0dcf3]",
                look === "blue" && "border-[#5b9bd5] bg-[#d3e7f8]",
                look === "box" && "border-[#b9b9b9] bg-[#e2e2e2]",
                look === "dark" && "border-[#c0c0c0] bg-[#c9c9c9]"
            )}
        >
            <Glyph name={name} className={clsx("size-[15px]", look === "dark" && "opacity-50")} />
        </button>
    );
}

function Sep() {
    return <span className="mx-1 h-[19px] w-px shrink-0 bg-[#bdbdbd]" />;
}

function Coord({ id, label, value }) {
    return (
        <div className="flex h-[10px] items-center">
            <label htmlFor={id} className="w-4 pr-0.5 text-right font-bold">{label}</label>
            <input id={id} defaultValue={value} className="h-[10px] w-[60px] bg-white pl-px outline-none" />
        </div>
    );
}

function Delta({ label }) {
    return (
        <button aria-label={label} className="mr-1 flex h-[19px] w-[10px] shrink-0 items-center justify-center border border-[#4c94d4] bg-[#cce4f7]">
            <svg viewBox="0 0 6 8" className="h-2 w-1.5"><path d="M3 1l2.3 6H.7z" stroke="#111" fill="none" strokeWidth="1.2" /></svg>
        </button>
    );
}

function CoordBar() {
    return (
        <div className="flex h-6 shrink-0 items-center overflow-hidden bg-[#f0f0f0] pl-0.5 text-[8px] whitespace-nowrap text-[#111]">
            <span className="mr-1 h-3 w-px bg-[#bdbdbd]" />
            <Slot name="shrink" look="box" />
            <Slot name="snapgrid" look="box" />
            <Slot name="ortho" look="on" />
            <Slot name="snapgrid" />
            <Slot name="plus" look="on" />
            <Slot name="dots" />
            <Slot name="gridplus" />
            <span className="-ml-px" />
            <Sep />
            <Delta label="Relative Koordinaten" />
            <div>
                <Coord id="cx" label="⦣x:" value="38,093" />
                <Coord id="cy" label="⦣y:" value="5,569" />
            </div>
            <Sep />
            <Delta label="Relativer Winkel" />
            <div>
                <Coord id="cr" label="⦣r:" value="38,498" />
                <Coord id="cw" label="w:" value="8,32°" />
            </div>
            <Sep />
            <Slot name="slash" look="dark" />
            <Slot name="cone" />
            <Slot name="bell" />
            <Slot name="kite" />
            <Slot name="nodes" />
            <div className="mr-1.5 ml-1">
                <Coord id="cz" label="⦣z:" value="0,000" />
                <div className="flex h-[10px] items-center justify-between">
                    <span>zu Projekturspr...</span>
                    <button aria-label="Bezug wählen" className="flex size-[9px] items-center justify-center border border-[#a8a8a8]"><Caret right className="w-1" /></button>
                </div>
            </div>
            <Sep />
            <Slot name="setsquare" look="box" />
            <Slot name="nodeline" />
            <Slot name="nodex" />
            <Slot name="eraser" />
            <Sep />
            {["check", "parallel", "bisect", "offset", "multi", "onarc", "slabs"].map((g) => (
                <Slot key={g} name={g} />
            ))}
            <Slot name="bend" look="dark" />
            <Slot name="bend2" />
            <Slot name="bend3" />
            <Slot name="resize" />
            <Slot name="overlap" look="on" />
            <Slot name="wand" look="box" />
            <span className="-ml-0.5" />
            <Sep />
            <Slot name="origin" look="blue" />
            <Slot name="snapcheck" look="blue" />
            <Caret right className="mx-0.5 w-1" />
            <div className="flex w-[60px] items-start justify-between pl-1">
                <p className="leading-[10px]">Hälfte<br /><span className="text-[#888]">2</span></p>
                <button aria-label="Teilung wählen" className="flex size-[9px] items-center justify-center border border-[#a8a8a8]"><Caret right className="w-1" /></button>
            </div>
            <Sep />
            <button className="mr-[3px] h-[15px] w-[45px] border border-[#bcbcbc] bg-[#cccccc] text-[#808080]">OK</button>
            <button className="h-[15px] w-[45px] border border-[#bcbcbc] bg-[#cccccc] text-[#808080]">Abbrechen</button>
        </div>
    );
}

function OfficeIcon({ letter, color }) {
    return (
        <svg viewBox="0 0 16 16" className="size-4">
            <rect x="8" y="2" width="7" height="12" fill="#fff" stroke={color} />
            <path d="M10 5h4M10 8h4M10 11h4" stroke={color} />
            <path d="M1 2l9-1v14l-9-1z" fill={color} />
            <text x="5.5" y="11" fontSize="8" fontWeight="bold" fill="#fff" textAnchor="middle">{letter}</text>
        </svg>
    );
}

function Flame({ className }) {
    return (
        <svg viewBox="0 0 16 16" className={className}>
            <path d="M8 0c1 3 5 5 5 10 0 4-2 6-5 6s-6-2-5-6c0-2 1-3 1-5l2 2c1-2 2-4 2-7z" fill="#f4511e" />
            <path d="M8 7c1 2 3 3 2 6-1 2-4 2-5 0-1-3 2-4 3-6z" fill="#ffc928" />
        </svg>
    );
}

function BoxApp() {
    return (
        <svg viewBox="0 0 16 16" className="size-4">
            <path d="M0 0h16v16H0z" fill="#1877d4" />
            <path d="M8 3l6 3-6 4-6-4zM2 10l3-1 3 2 3-2 3 1-6 4z" fill="#fff" />
            <path d="M6 6c1-1 3-1 4 0-1 2-3 2-4 0" fill="#1877d4" />
        </svg>
    );
}

const APPS = [
    ["Cortana", <svg viewBox="0 0 16 16" className="size-3.5"><circle cx="8" cy="8" r="5" stroke="#fff" strokeWidth="1.5" fill="none" /></svg>],
    ["Taskansicht", <svg viewBox="0 0 16 16" className="size-3.5"><path d="M2 5h8v6H2zM2 1v2h8V1M2 15v-2h8v2M13 1v3M13 6v3M13 12v3" stroke="#ddd" fill="none" /></svg>],
    ["Beenden", <svg viewBox="0 0 16 16" className="size-4"><path d="M2 3l11 11M13 2C9 5 6 9 3 14" stroke="#e5141b" strokeWidth="2" fill="none" /></svg>],
    ["Sync", <svg viewBox="0 0 16 16" className="size-4"><path d="M2 7c1-6 8-7 11-3M14 9c-1 6-8 7-11 3" stroke="#2f9bea" strokeWidth="2.5" fill="none" /><path d="M15 1v6H9zM1 15V9h6z" fill="#2f9bea" /></svg>],
    ["Pfeil", <svg viewBox="0 0 16 16" className="size-4"><path d="M7 1l5 6H9c0 4 1 6 4 8-5 0-7-3-7-8H2z" fill="#16c928" /></svg>],
    ["Box", <BoxApp />],
    ["Chrome", <svg viewBox="0 0 16 16" className="size-4"><circle cx="8" cy="8" r="7" fill="#fbc116" /><path d="M8 8L2 4.3A7 7 0 0 1 14.5 5z" fill="#e33b2e" /><path d="M2 4.3L6 11l2 4A7 7 0 0 1 2 4.3" fill="#2fa14f" /><circle cx="8" cy="8" r="3.5" fill="#fff" /><circle cx="8" cy="8" r="2.7" fill="#4285f4" /></svg>, "open"],
    ["Edge", <svg viewBox="0 0 16 16" className="size-4"><circle cx="8" cy="8" r="7" fill="#1583d6" /><path d="M1 8c1-9 14-9 14-1 0 3-4 4-6 3 1-3-1-4-3-3-2 2-1 6 3 8-5 0-9-3-8-7z" fill="#32c8b0" /><path d="M6 7c-2 3 0 7 6 7-5 3-11-1-11-6 1-3 4-3 5-1z" fill="#0c59a4" /></svg>],
    ["Firefox", <svg viewBox="0 0 16 16" className="size-4"><circle cx="8" cy="9" r="6.5" fill="#ff7b1c" /><path d="M10 1c4 3 5 7 4 11-1 3-4 4-7 3 6-2 6-8 3-14z" fill="#ffcf3a" /><circle cx="8" cy="9" r="3" fill="#7747c9" /><path d="M2 4l3 3 4-1-2 3-3 1-3-1z" fill="#f0383a" /></svg>],
    ["Desktop", <svg viewBox="0 0 16 16" className="size-4"><path d="M2 3l12-1-1 10-11 1z" fill="#e8e8e8" /><path d="M5 5l9-1-2 9-8-1z" fill="#4aa3dc" /><path d="M2 10l5-3 6 6H5z" fill="#dcc77a" /></svg>],
    ["Monitor", <svg viewBox="0 0 16 16" className="size-4"><path d="M4 2h11v8H4z" fill="#cfd4d8" /><path d="M6 7h2l1-3 1 4 1-2h2" stroke="#4a90c0" fill="none" /><path d="M1 8l7 1-1 5-5-1z" fill="#aaa" /></svg>],
    ["Explorer", <svg viewBox="0 0 16 16" className="size-4"><path d="M1 2h6l1 2h7v10H1z" fill="#f7c64a" /><path d="M1 6h14v8H1z" fill="#fddc7c" /><path d="M4 10h8v4h-2v-2H6v2H4z" fill="#3d8fd1" /></svg>],
    ["Rechner", <svg viewBox="0 0 16 16" className="size-4"><path d="M2 0h12v16H2z" fill="#fff" /><path d="M4 2h8v2H4z" fill="#222" /><path d="M4 7h8M4 10h8M4 13h8" stroke="#222" strokeWidth="1.5" strokeDasharray="1.5 1.5" /></svg>],
    ["Suche", <svg viewBox="0 0 16 16" className="size-4"><path d="M3 1h13v10H3z" fill="#43a5e6" /><circle cx="6" cy="9" r="3" fill="#bcdcf1" stroke="#888" /><path d="M4 11l-3 4" stroke="#aaa" strokeWidth="1.5" /></svg>],
    ["Brennen", <Flame className="size-4" />],
    ["Excel", <OfficeIcon letter="X" color="#1d6f42" />],
    ["Archicad", <svg viewBox="0 0 16 16" className="size-4"><path d="M1 14C1 6 5 1 10 2c4 1 5 6 5 12-2 0-3 0-4-1 0-4-1-6-3-6-3 0-4 4-5 7z" fill="#3f6fe0" /><path d="M2 13c0-6 4-10 8-9" stroke="#d7e3ff" strokeWidth="1.5" fill="none" /></svg>, "active"],
    ["Word", <OfficeIcon letter="W" color="#2a5699" />],
    ["PowerPoint", <OfficeIcon letter="P" color="#d24625" />],
    ["Publisher", <OfficeIcon letter="P" color="#0a7a68" />],
    ["Acrobat", <svg viewBox="0 0 16 16" className="size-4"><path d="M1 1h14v14H1z" fill="#2b0508" stroke="#b3191f" /><path d="M3 12c3-1 6-6 5-8-1-1-1 2 1 4s4 2 4 1c-1-1-6 0-9 3" stroke="#fff" fill="none" /></svg>],
    ["Photoshop", <svg viewBox="0 0 16 16" className="size-4"><rect x="1" y="1" width="14" height="14" rx="2" fill="#001d34" /><text x="8" y="11" fontSize="8" fontWeight="bold" fill="#31a8ff" textAnchor="middle">Ps</text></svg>],
    ["Box Sync", <BoxApp />, "open"],
];

function Tray() {
    return (
        <div className="flex shrink-0 items-center pr-[3px] text-[9px] text-white">
            <button aria-label="Ausgeblendete Symbole" className="flex w-4 justify-center">
                <svg viewBox="0 0 8 8" className="size-2"><path d="M0 6l4-4 4 4" stroke="#fff" fill="none" /></svg>
            </button>
            <Flame className="mx-0.5 size-3" />
            <svg viewBox="0 0 12 12" className="mx-0.5 size-3"><path d="M3 4h8v5H3zM1 2v3M0 4h3" stroke="#fff" fill="none" /><path d="M5 5h5v3H5z" fill="#fff" /></svg>
            <svg viewBox="0 0 12 12" className="mx-0.5 size-3"><path d="M1 11C1 5 5 2 11 2M4 11c0-4 3-6 7-6M7 11c0-2 2-3 4-3" stroke="#bbb" fill="none" /></svg>
            <svg viewBox="0 0 12 12" className="mx-0.5 size-3"><path d="M0 4h2l3-3v10L2 8H0zM7 4c1 1 1 3 0 4M9 3c2 2 2 4 0 6M11 2c2 3 2 5 0 8" stroke="#fff" fill="none" /></svg>
            <svg viewBox="0 0 12 12" className="mx-1 size-3"><path d="M11 1L4 9l-1 1M11 1L6 4 3 9M1 7c-2 3 2 5 4 3s4-2 4-4-4 0-3 2 5 1 5 0" stroke="#fff" fill="none" /></svg>
            <svg viewBox="0 0 16 10" className="ml-0.5 h-2.5 w-4"><path d="M.5.5h15v9H.5zM4 7.5h8" stroke="#fff" fill="none" /><path d="M2 3h12M2 5h12" stroke="#fff" strokeDasharray="1 1" /></svg>
            <span className="w-8 text-center">DEU</span>
            <p className="w-10 text-center text-[8px] leading-3">09:29<br />29.04.2021</p>
            <button aria-label="Benachrichtigungen" className="relative mx-2.5 flex size-[14px]">
                <svg viewBox="0 0 14 14" className="size-[14px]"><path d="M0 0h12v9H6l-3 3V9H0z" fill="#fff" /><path d="M2 3h8M2 6h8" stroke="#111" /></svg>
                <span className="absolute -right-1 -bottom-1 flex size-[10px] items-center justify-center rounded-full border border-[#bbb] bg-[#222] text-[7px]">2</span>
            </button>
            <span className="h-[27px] w-px bg-[#4a4a4a]" />
        </div>
    );
}

function Taskbar() {
    return (
        <footer className="flex h-[27px] shrink-0 bg-[#111111]">
            <button aria-label="Start" className="flex w-8 shrink-0 items-center justify-center">
                <svg viewBox="0 0 12 12" className="size-3"><path d="M0 2l5-1v5H0zM6 1l6-1v6H6zM0 7h5v5l-5-1zM6 7h6v5H6z" fill="#fff" /></svg>
            </button>
            <label htmlFor="search" className="flex w-[229px] shrink-0 items-center bg-[#3b3b3b] pl-2">
                <svg viewBox="0 0 12 12" className="size-3"><circle cx="7" cy="5" r="4" stroke="#ddd" fill="none" /><path d="M4 8l-4 4" stroke="#ddd" /></svg>
                <input
                    id="search"
                    aria-label="Suche"
                    placeholder="Zur Suche Text hier eingeben"
                    className="ml-[7px] min-w-0 flex-1 text-[10px] text-white outline-none placeholder:text-[#cfcfcf]"
                />
            </label>
            <div className="mr-[41px] flex min-w-0 flex-1">
                {APPS.map(([name, icon, state]) => (
                    <button
                        key={name}
                        aria-label={name}
                        className={clsx(
                            "flex min-w-0 flex-1 items-center justify-center border-y-2 border-t-transparent",
                            state ? "border-b-[#6f9ed6]" : "border-b-transparent",
                            state === "active" && "bg-[#333]"
                        )}
                    >
                        {icon}
                    </button>
                ))}
            </div>
            <Tray />
        </footer>
    );
}

export default function App() {
    return (
        <div className="flex h-screen flex-col overflow-hidden bg-white font-['Roboto','Noto_Sans',sans-serif] leading-none text-[#1a1a1a]">
            <Titlebar />
            <MenuBar />
            <Toolbar />
            <div className="relative flex min-h-0 flex-1">
                <Sidebar />
                <main className="flex min-w-0 flex-1 flex-col">
                    <Tabs />
                    <div className="relative min-h-0 flex-1 bg-white">
                        <Drawing />
                        <div className="absolute top-px left-[568px] flex h-2.5 w-[21px] items-center justify-center bg-[#f0f0f0]">
                            <span className="h-px w-1 bg-[#8fb6ee]" />
                            <Glyph name="eye" className="size-2" />
                            <span className="h-px w-1 bg-[#8fb6ee]" />
                        </div>
                        <LayerPalette />
                    </div>
                    <ViewBar />
                </main>
                <EditPalette />
            </div>
            <CoordBar />
            <Taskbar />
        </div>
    );
}
